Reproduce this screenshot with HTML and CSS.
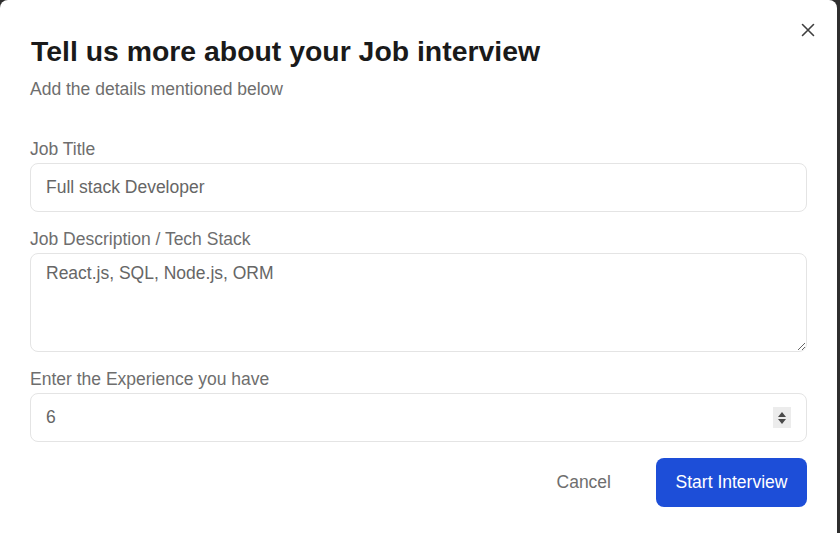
FILE: index.html
```html
<!DOCTYPE html>
<html lang="en">
<head>
<meta charset="utf-8">
<title>Tell us more about your Job interview</title>
<link rel="stylesheet" href="styles.css">
</head>
<body>
<div class="dialog">
  <button class="close" aria-label="Close">
    <svg width="14" height="14" viewBox="0 0 14 14"><path d="M1.5 1.5 L12.5 12.5 M12.5 1.5 L1.5 12.5" stroke="#3f3f3f" stroke-width="1.6" fill="none" stroke-linecap="round"/></svg>
  </button>
  <h1 class="title">Tell us more about your Job interview</h1>
  <p class="subtitle">Add the details mentioned below</p>
  <form class="form">
    <div class="field">
      <label class="label">Job Title</label>
      <input class="input" type="text" value="Full stack Developer">
    </div>
    <div class="field">
      <label class="label">Job Description / Tech Stack</label>
      <textarea class="textarea">React.js, SQL, Node.js, ORM</textarea>
    </div>
    <div class="field">
      <label class="label">Enter the Experience you have</label>
      <div class="num-wrap">
        <input class="input num" type="number" value="6">
        <span class="spinner">
          <svg width="10" height="14" viewBox="0 0 10 14"><path d="M5 1 L9 6 L1 6 Z M1 8 L9 8 L5 13 Z" fill="#4a4a4a"/></svg>
        </span>
      </div>
    </div>
    <div class="actions">
      <button type="button" class="btn-cancel">Cancel</button>
      <button type="button" class="btn-primary">Start Interview</button>
    </div>
  </form>
</div>
</body>
</html>
```
FILE: styles.css
```css
html, body {
  margin: 0;
  padding: 0;
  height: 100%;
  background: #2e2e2e;
  overflow: hidden;
}
body {
  font-family: "Liberation Sans", Arial, sans-serif;
}
.dialog {
  position: relative;
  width: 837px;
  height: 545px;
  background: #ffffff;
  border-radius: 8px;
  box-sizing: border-box;
  padding: 34px 30px 0 30px;
  display: flex;
  flex-direction: column;
}
.close {
  position: absolute;
  top: 23px;
  right: 22px;
  width: 14px;
  height: 14px;
  padding: 0;
  border: none;
  background: none;
  display: flex;
}
.title {
  margin: 0;
  font-size: 28.4px;
  line-height: 34px;
  font-weight: 700;
  color: #1a1a1a;
  padding-left: 1px;
}
.subtitle {
  margin: 9px 0 0 0;
  font-size: 17.5px;
  line-height: 24px;
  color: #6e6e6e;
}
.form {
  margin-top: 36px;
  display: flex;
  flex-direction: column;
  gap: 15px;
}
.field {
  display: flex;
  flex-direction: column;
  gap: 2px;
}
.label {
  font-size: 17.5px;
  line-height: 24px;
  color: #6e6e6e;
}
.input, .textarea {
  box-sizing: border-box;
  width: 100%;
  margin: 0;
  border: 1px solid #e4e4e4;
  border-radius: 8px;
  font-family: "Liberation Sans", Arial, sans-serif;
  font-size: 17.5px;
  color: #666666;
  background: #ffffff;
  outline: none;
}
.input {
  height: 49px;
  padding: 0 15px;
}
.textarea {
  height: 99px;
  padding: 7px 15px;
  line-height: 24px;
  resize: vertical;
}
.num-wrap {
  position: relative;
}
.num::-webkit-inner-spin-button,
.num::-webkit-outer-spin-button {
  -webkit-appearance: none;
  margin: 0;
}
.num {
  -moz-appearance: textfield;
}
.spinner {
  position: absolute;
  right: 16px;
  top: 14px;
  width: 18px;
  height: 21px;
  background: #ececec;
  display: flex;
  align-items: center;
  justify-content: center;
}
.actions {
  display: flex;
  justify-content: flex-end;
  align-items: center;
  gap: 25px;
  margin-top: 1px;
}
.btn-cancel {
  border: none;
  background: none;
  font-family: "Liberation Sans", Arial, sans-serif;
  font-size: 17.5px;
  color: #6e6e6e;
  padding: 0 20px;
  height: 49px;
}
.btn-primary {
  border: none;
  background: #1d4ed8;
  color: #ffffff;
  font-family: "Liberation Sans", Arial, sans-serif;
  font-size: 17.5px;
  height: 49px;
  width: 151px;
  border-radius: 8px;
  padding: 0;
}
```
